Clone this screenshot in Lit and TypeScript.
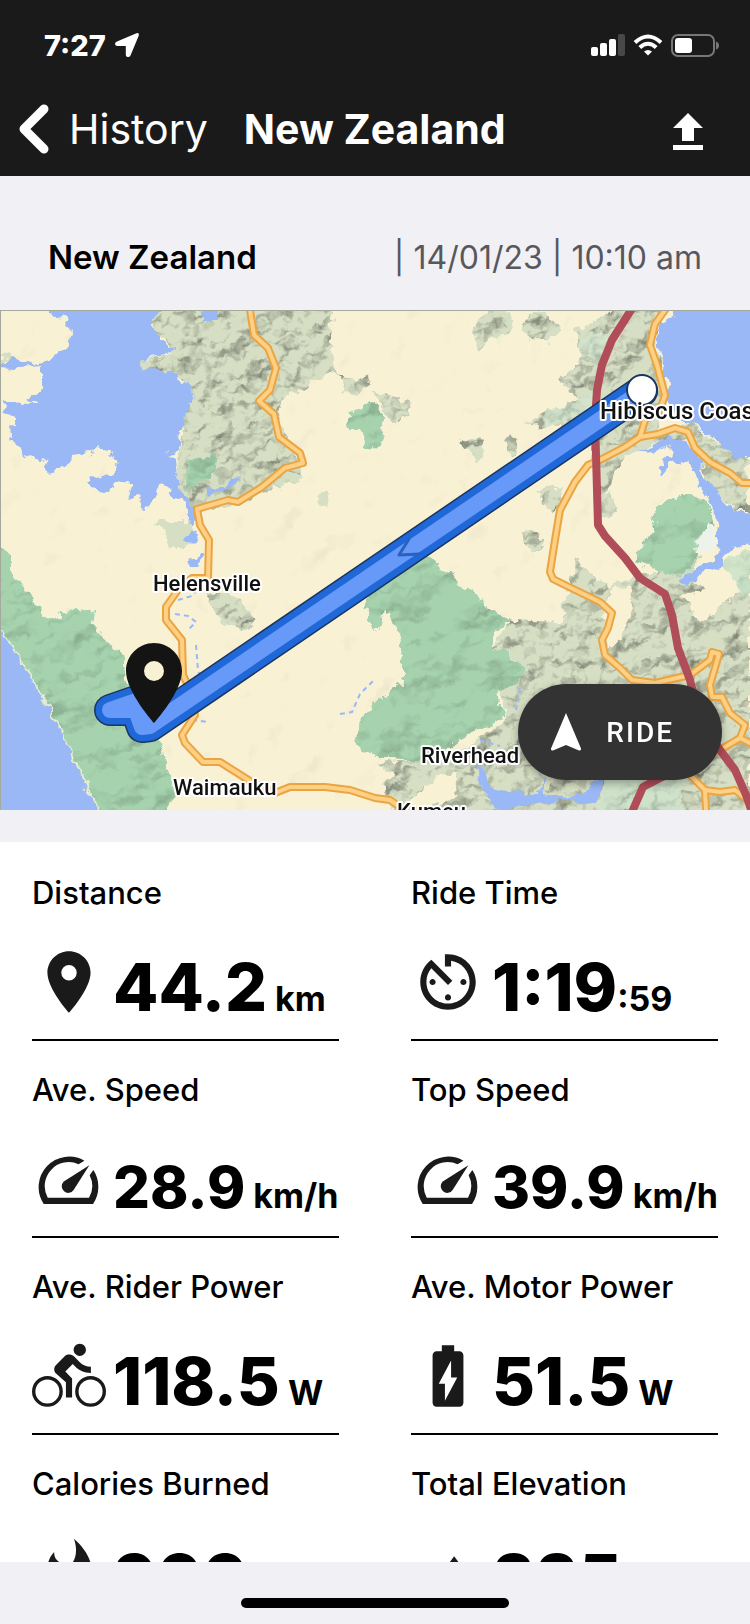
import { LitElement, html, css, svg, nothing } from 'lit';
import type { SVGTemplateResult } from 'lit';
import { customElement, property } from 'lit/decorators.js';
import { classMap } from 'lit/directives/class-map.js';

interface Stat {
  label: string;
  icon: string;
  value: string;
  unit: string;
  // the unit follows the value without a space
  tight?: boolean;
  small?: boolean;
}

const stats: Stat[] = [
  { label: 'Distance', icon: 'pin', value: '44.2', unit: 'km' },
  { label: 'Ride Time', icon: 'timer', value: '1:19', unit: ':59', tight: true },
  { label: 'Ave. Speed', icon: 'speed', value: '28.9', unit: 'km/h', small: true },
  { label: 'Top Speed', icon: 'speed', value: '39.9', unit: 'km/h', small: true },
  { label: 'Ave. Rider Power', icon: 'bike', value: '118.5', unit: 'W' },
  { label: 'Ave. Motor Power', icon: 'battery', value: '51.5', unit: 'W' },
  { label: 'Calories Burned', icon: 'flame', value: '900', unit: '' },
  { label: 'Total Elevation', icon: 'mountain', value: '335', unit: '' },
];

const icons: Record<string, SVGTemplateResult> = {
  pin: svg`<path fill-rule="evenodd" d="M12 2C8.13 2 5 5.13 5 9c0 5.25 7 13 7 13s7-7.75 7-13c0-3.87-3.13-7-7-7zm0 9.5a2.5 2.5 0 0 1 0-5 2.5 2.5 0 0 1 0 5z"/>`,
  timer: svg`<path d="M11 17c0 .55.45 1 1 1s1-.45 1-1-.45-1-1-1-1 .45-1 1zm0-14v4h2V5.08c3.39.49 6 3.39 6 6.92 0 3.87-3.13 7-7 7s-7-3.13-7-7c0-1.68.59-3.22 1.58-4.42L12 13l1.41-1.41-6.8-6.8v.02C4.42 6.45 3 9.05 3 12c0 4.97 4.02 9 9 9 4.97 0 9-4.03 9-9s-4.03-9-9-9h-1zm7 9c0-.55-.45-1-1-1s-1 .45-1 1 .45 1 1 1 1-.45 1-1zM6 12c0 .55.45 1 1 1s1-.45 1-1-.45-1-1-1-1 .45-1 1z"/>`,
  speed: svg`
    <path d="M17 6.05A9.9 9.9 0 0 0 3.8 20.1h16a9.9 9.9 0 0 0 .1-11l-1.2 1.7a7.8 7.8 0 0 1-.2 7.3H5.1A7.8 7.8 0 0 1 15.1 7.2z"/>
    <path d="M18.6 7.5l-5.1 8.1a2.1 2.1 0 0 1-3.1.4 2.2 2.2 0 0 1-.1-3.2z"/>`,
  bike: svg`
    <path d="M15.5 5.5c1.1 0 2-.9 2-2s-.9-2-2-2-2 .9-2 2 .9 2 2 2zM10.8 10.5l2.4-2.4.8.8c1.3 1.3 3 2.1 5.1 2.1V9c-1.5 0-2.7-.6-3.6-1.5l-1.9-1.9c-.5-.4-1-.6-1.6-.6s-1.1.2-1.4.6L7.8 8.4c-.4.4-.6.9-.6 1.4 0 .6.2 1.1.6 1.4L11 14v5h2v-6.2z"/>
    <g fill="none" stroke="currentColor" stroke-width="1.1">
      <circle cx="5" cy="17" r="4.45"/>
      <circle cx="19" cy="17" r="4.45"/>
    </g>`,
  battery: svg`<path d="M15.67 4H14V2h-4v2H8.33C7.6 4 7 4.6 7 5.33v15.33C7 21.4 7.6 22 8.33 22h7.33c.74 0 1.34-.6 1.34-1.33V5.33C17 4.6 16.4 4 15.67 4zM11 20v-5.5H9L13 7v5.5h2L11 20z"/>`,
  flame: svg`<path d="M13.6.9C16 3 18 5.5 18.9 8.4c1.6 4.5.6 13.6-6.9 13.6-7 0-8.5-8-6.7-13.6.4-1.2 1-2.3 1.9-3.2-.1 1.4.5 2.6 1.6 3.2 1.1.6 3.2 1.2 4.5 0C14.6 6.5 14.5 3.3 13.6.9z"/>`,
  mountain: svg`<path d="M14 6.6l-3.75 5 2.85 3.8-1.6 1.2C9.81 14.35 7 10.6 7 10.6l-6 8h22z"/>`,
};

@customElement('stat-tile')
class StatTile extends LitElement {
  @property({ attribute: false }) stat!: Stat;

  static styles = css`
    :host {
      display: block;
      padding: 29px 0 10px;
      border-bottom: 2px solid #000;
      color: #000;
    }
    h2 {
      margin: 0;
      font-size: 31px;
      line-height: 40px;
      font-weight: 500;
    }
    .row {
      display: flex;
      align-items: flex-start;
      gap: 7px;
      margin-top: 32px;
      height: 84px;
    }
    .icon {
      flex: none;
      width: 74px;
      height: 74px;
      color: #1a1a1a;
      fill: currentColor;
    }
    .reading {
      margin: 0;
      font-size: 66px;
      line-height: 84px;
      font-weight: 800;
      white-space: nowrap;
    }
    .reading span {
      line-height: 1;
    }
    .small {
      font-size: 58px;
    }
    .unit {
      font-size: 34px;
      font-weight: 700;
    }
  `;

  render() {
    const { label, icon, value, unit, tight, small } = this.stat;
    return html`
      <h2>${label}</h2>
      <div class="row">
        <svg class="icon" viewBox="0 0 24 24" aria-hidden="true">${icons[icon]}</svg>
        <p class="reading"><span class=${classMap({ small: !!small })}>${value}</span>${unit
          ? html`<span class="unit">${tight ? nothing : ' '}${unit}</span>`
          : nothing}</p>
      </div>
    `;
  }
}

const minorRoads = [
  'M250 0L254 25L268 38L276 58L270 80L259 91L274 104L279 127L300 143L303 153L285 158L262 177L238 192L228 190L197 199L200 215L209 230L208 268L192 268L178 280L166 297L166 310L182 330L183 365L190 380L195 405L182 425L185 433L203 452L220 452L250 471L275 483L290 477L325 477L350 480L375 488L390 490L400 497L430 504',
  'M665 0L655 14L650 35L657 55L665 85L660 100L645 110L640 127L625 137L600 150L588 155L575 172L560 200L555 230L550 262L553 269L565 275L600 292L612 303L608 318L602 330L605 345L620 358L632 370L655 373L690 365L710 350L712 342L719 344L710 375L712 387L722 387L730 403L745 415L740 428L720 440L700 450L690 465L705 480L720 482L735 480L750 492',
  'M640 127L658 124L675 118L688 122L695 138L710 152L730 163L742 173L750 173',
  'M740 428L750 433M705 480L706 500',
];

const highways = [
  'M631 0L612 30L602 55L597 80L595 110L598 215L605 226L625 248L640 268L665 284L672 305L678 338L690 370L700 410L720 440L735 460L746 485L752 502',
  'M632 502L643 477L660 468L690 455',
];

const route = 'M642 81L150 416L142 417L136 400L110 400L136 391L152 402';

const places = [
  { name: 'Hibiscus Coast', x: 600, y: 109, big: true },
  { name: 'Helensville', x: 153, y: 281 },
  { name: 'Waimauku', x: 173, y: 485 },
  { name: 'Riverhead', x: 421, y: 453 },
  { name: 'Kumeu', x: 397, y: 509 },
];

@customElement('ride-map')
class RideMap extends LitElement {
  static styles = css`
    :host {
      display: block;
      position: relative;
    }
    .map {
      display: block;
      width: 100%;
      aspect-ratio: 3 / 2;
      overflow: hidden;
    }
    .land {
      fill: #f8f1d4;
    }
    .water {
      fill: #9ab8f6;
    }
    .forest {
      fill: #a6d3ae;
    }
    .hills {
      fill: #d6dfc4;
    }
    .road,
    .highway,
    .route {
      fill: none;
      stroke-linejoin: round;
      stroke-linecap: round;
    }
    .casing {
      stroke: #e9a544;
      stroke-width: 8px;
    }
    .core {
      stroke: #ffd083;
      stroke-width: 4px;
    }
    .highway {
      stroke: #b04d58;
      stroke-width: 8px;
    }
    .edge {
      stroke: #1b3560;
      stroke-width: 32px;
    }
    .body {
      stroke: #2068d8;
      stroke-width: 29px;
    }
    .centre {
      stroke: #6699f8;
      stroke-width: 16px;
    }
    .arrow {
      stroke: #2a62c0;
      stroke-width: 3px;
    }
    .end {
      fill: #fff;
      stroke: #1b3560;
      stroke-width: 2px;
    }
    .place {
      font: 500 22px Roboto, sans-serif;
      fill: #111;
      stroke: #fff;
      stroke-width: 4px;
      stroke-linejoin: round;
      paint-order: stroke;
    }
    .big {
      font-size: 24px;
    }
    .ride {
      position: absolute;
      right: 28px;
      bottom: 30px;
      display: flex;
      align-items: center;
      gap: 24px;
      height: 96px;
      padding: 0 48px 0 32px;
      border: 0;
      border-radius: 48px;
      background: #333;
      box-shadow: 0 3px 8px rgba(0, 0, 0, 0.35);
      color: #fff;
      font: 500 28px Roboto, sans-serif;
      letter-spacing: 2px;
    }
    .ride svg {
      width: 32px;
      height: 38px;
      fill: #fff;
    }
  `;

  renderTerrain() {
    return svg`
      <g filter="url(#rough)">
        <g filter="url(#soft)">
          <rect class="land" x="-10" y="-10" width="770" height="520"/>
        </g>
        <g class="hills" filter="url(#relief)">
          <path d="M150 -9H335L330 30L336 60L312 74L290 85L278 98L285 130L302 158L300 172L288 172L270 180L240 192L196 202L176 178L178 145L190 80L178 66L140 58L139 50L172 44L172 36L158 24L150 12z"/>
          <path d="M335 58L345 68L360 72L368 64L370 74L358 86L345 80z"/>
          <path d="M474 20L480 5L500 -5L515 8L508 24L485 30L478 42z"/>
          <path d="M522 20L528 5L545 2L562 20L550 32L530 28z"/>
          <path d="M375 80L392 86L412 92L402 112L385 108z"/>
          <path d="M460 132L480 128L486 142L476 152z"/>
          <path d="M505 130L512 148L520 142L512 126z"/>
          <path d="M536 180L560 176L562 195L550 205z"/>
          <path d="M520 222L540 220L545 236L532 244z"/>
          <path d="M205 280L235 285L255 310L250 320L220 312z"/>
          <path d="M575 20L600 8L620 -5H665L655 30L665 80L664 100L655 125L690 114L715 132L748 150V200L735 200L715 185L690 130L650 134L625 146L605 182L598 200L593 120L560 116L525 115L548 100L578 90L560 70L582 50z"/>
          <path d="M596 195L610 180L615 205L600 210z"/>
          <path d="M512 310L560 312L575 250L610 278L640 262L680 262L720 290L750 255V510H395L375 452L450 450L505 410L495 335z"/>
        </g>
        <path class="land" d="M612 280L630 276L632 300L618 336L606 336L604 300zM440 465H456L458 486L440 496L400 500L420 482zM375 452L390 460L392 470L375 475zM680 285L715 278L738 262L742 280L715 300L700 312L690 296z"/>
        <path class="hills" d="M155 211H190L196 225L185 238H170L165 222zM318 187L326 182L330 192L324 198zM284 162L300 160L300 170L288 172zM0 46L12 42L8 52L0 54z"/>
        <g class="forest" filter="url(#relief-soft)">
          <path d="M183 160L190 152L215 142L219 148L218 162L195 178L186 180z"/>
          <path d="M347 102L362 98L368 91L376 96L381 102L382 132L378 138L363 137L362 125L352 116z"/>
          <path d="M400 255L420 245L452 262L458 276L474 282L490 300L512 310L494 322L495 335L525 357L520 372L497 383L505 408L480 418L465 428L430 452L385 449L365 440L355 435L358 415L375 390L390 385L402 372L402 345L397 318L385 297L380 322L370 318L365 290L378 278z"/>
          <path d="M652 202L670 190L688 185L705 190L712 200L714 225L700 242L685 262L665 264L650 258L636 250L643 232L655 220z"/>
          <path d="M580 30L600 20L606 30L598 50L582 44zM545 102L575 92L592 84L592 105L545 115z" opacity="0.5"/>
          <path d="M605 470L640 460L690 455L680 500H600z" opacity="0.6"/>
          <path d="M675 250L700 246L690 264L676 268zM722 254L750 238V290L742 280z" opacity="0.7"/>
          <path d="M-9 232L10 245L13 265L30 282L46 309L65 301L82 298L95 302L93 315L105 330L122 342L126 364L135 400L160 432L165 450L170 470L178 480L172 490L164 510H-9z"/>
        </g>
        <path class="water" d="M48 -9V6L66 8L72 22L70 35L60 41L50 50L35 55L24 50L12 46L5 54L-9 54V57L20 58L42 56L42 78L28 88L35 93L20 98L4 92L2 100L18 104L18 116L10 118L12 130L20 140L24 146L42 150L48 148L43 161L60 160L72 152L73 145L95 141L97 137L108 139L115 155L115 165L104 168L92 165L90 172L96 178L108 183L118 172L130 170L132 178L128 190L140 186L142 200L152 199L155 185L160 176L165 173L172 185L188 197L188 210L194 216L196 198L188 190L178 178L176 160L175 148L166 144L178 142L180 122L188 108L192 78L190 72L180 76L178 66L160 60L140 58L139 50L155 46L172 42L174 36L160 30L158 22L150 15L152 8L162 2L160 -9z"/>
        <path class="water" d="M202 -9H218L218 6L208 14L203 4zM204 182L215 178L228 176L232 166L240 172L225 180L208 186zM184 228L196 222L200 230L192 236zM188 248L204 244L198 256L190 256z"/>
        <path class="water" d="M667 -9L676 6L662 12L657 30L662 56L668 80L669 92L682 112L700 118L715 130L735 147L760 147V-9z"/>
        <path class="water" d="M635 139L655 135L668 126L682 128L698 145L703 165L715 178L725 196L740 202L760 200V230L735 238L722 250L725 256L700 264L688 276L680 270L700 256L718 246L719 225L716 205L705 185L695 170L688 148L682 158L674 150L662 166L660 160L672 142L668 134L655 142z"/>
        <path class="water" d="M478 452L485 460L490 478L505 482L540 484L542 462L545 484L570 488L590 478L607 460L600 482L596 494L560 490L530 496L500 500L490 490L480 472z"/>
        <path class="water" d="M-9 308L0 317L20 350L45 390L65 430L85 470L102 510H-9z"/>
        <path d="M0 317L20 350L45 390L65 430L85 470L102 510" fill="none" stroke="#e6ecd2" stroke-width="2"/>
        <path d="M695 238L702 222L708 212L716 224L719 234L710 242L700 243z" fill="#eef3ea"/>
      </g>
      <g fill="none" stroke="#9ab8f6" stroke-width="2" stroke-dasharray="5 4">
        <path d="M178 290L192 286L200 276M175 304L188 306L196 312L188 320M196 335L198 360L204 378M192 410L208 412M340 404L352 402L360 384L374 370"/>
        <path d="M520 378L516 400M480 430L500 436"/>
      </g>`;
  }

  render() {
    return html`
      <svg class="map" viewBox="0 0 750 500" preserveAspectRatio="xMidYMid slice" role="img" aria-label="Ride map">
        <defs>
          <filter id="rough" x="0" y="0" width="750" height="500" filterUnits="userSpaceOnUse" color-interpolation-filters="sRGB">
            <feTurbulence type="fractalNoise" baseFrequency="0.09" numOctaves="3" seed="4" result="n"/>
            <feDisplacementMap in="SourceGraphic" in2="n" scale="13" xChannelSelector="R" yChannelSelector="G"/>
          </filter>
          <filter id="relief" x="-10" y="-10" width="770" height="520" filterUnits="userSpaceOnUse" color-interpolation-filters="sRGB">
            <feTurbulence type="fractalNoise" baseFrequency="0.035 0.045" numOctaves="3" seed="11"/>
            <feDiffuseLighting lighting-color="#ffffff" surfaceScale="4" diffuseConstant="1.2" result="l">
              <feDistantLight azimuth="225" elevation="54"/>
            </feDiffuseLighting>
            <feBlend in="SourceGraphic" in2="l" mode="multiply"/>
            <feComposite in2="SourceGraphic" operator="in"/>
          </filter>
          <filter id="relief-soft" x="-10" y="-10" width="770" height="520" filterUnits="userSpaceOnUse" color-interpolation-filters="sRGB">
            <feTurbulence type="fractalNoise" baseFrequency="0.02 0.03" numOctaves="3" seed="6"/>
            <feDiffuseLighting lighting-color="#ffffff" surfaceScale="3" diffuseConstant="1.2" result="l">
              <feDistantLight azimuth="225" elevation="56"/>
            </feDiffuseLighting>
            <feBlend in="SourceGraphic" in2="l" mode="multiply"/>
            <feComposite in2="SourceGraphic" operator="in"/>
          </filter>
          <filter id="soft" x="-10" y="-10" width="770" height="520" filterUnits="userSpaceOnUse" color-interpolation-filters="sRGB">
            <feTurbulence type="fractalNoise" baseFrequency="0.03" numOctaves="2" seed="3"/>
            <feDiffuseLighting lighting-color="#ffffff" surfaceScale="1" diffuseConstant="1.2" result="l">
              <feDistantLight azimuth="225" elevation="58"/>
            </feDiffuseLighting>
            <feBlend in="SourceGraphic" in2="l" mode="multiply"/>
          </filter>
        </defs>
        ${this.renderTerrain()}
        ${minorRoads.map((d) => svg`<path class="road casing" d=${d}/>`)}
        ${minorRoads.map((d) => svg`<path class="road core" d=${d}/>`)}
        ${highways.map((d) => svg`<path class="highway" d=${d}/>`)}
        <path class="route edge" d=${route} />
        <path class="route body" d=${route} />
        <path class="route centre" d=${route} />
        <path class="route arrow" d="M409 229L399 245L420 244" />
        <circle class="end" cx="642" cy="80" r="15" />
        ${places.map(
          (p) => svg`<text class=${classMap({ place: true, big: !!p.big })} x=${p.x} y=${p.y}>${p.name}</text>`
        )}
        <g transform="translate(106 325) scale(4)">
          <circle cx="12" cy="9" r="3" fill="#f8f1d4" />
          <g fill="#141414">${icons.pin}</g>
        </g>
        <path d="M0 0.5H750M0.5 0V500" fill="none" stroke="#a5a99c" />
      </svg>
      <button class="ride" type="button">
        <svg viewBox="0 0 32 38" aria-hidden="true">
          <path d="M16 0L31 35.5Q31.5 38 29 37.5L16 32L3 37.5Q0.5 38 1 35.5z" />
        </svg>
        RIDE
      </button>
    `;
  }
}

@customElement('app-root')
class AppRoot extends LitElement {
  static styles = css`
    :host {
      display: flex;
      flex-direction: column;
      height: 100vh;
      background: #f1f0f5;
      font-family: Inter, 'Liberation Sans', sans-serif;
    }
    header {
      flex: none;
      background: #1a1a1a;
      color: #fff;
    }
    .status {
      display: flex;
      align-items: center;
      justify-content: space-between;
      height: 78px;
      padding: 6px 31px 0 44px;
    }
    .status div {
      display: flex;
      align-items: center;
      gap: 8px;
    }
    .time {
      font-size: 29px;
      font-weight: 800;
    }
    .status svg {
      display: block;
    }
    nav {
      display: flex;
      align-items: center;
      height: 92px;
      padding: 0 46px 2px 18px;
      box-sizing: border-box;
    }
    .back {
      display: flex;
      align-items: center;
      gap: 19px;
      color: #fff;
      font-size: 41px;
      line-height: 50px;
      text-decoration: none;
    }
    h1 {
      flex: 1;
      margin: 0 0 0 36px;
      font-size: 41px;
      line-height: 50px;
      font-weight: 700;
    }
    .upload {
      display: flex;
      padding: 4px 0 0;
      border: 0;
      background: none;
      color: #fff;
    }
    main {
      flex: 1;
      min-height: 0;
      overflow-y: auto;
      scrollbar-width: none;
    }
    .summary {
      display: flex;
      align-items: center;
      justify-content: space-between;
      height: 106px;
      padding: 28px 48px 0;
      font-size: 33px;
    }
    .name {
      font-weight: 600;
    }
    .date {
      color: #58585c;
      font-size: 32px;
    }
    .stats {
      display: grid;
      grid-template-columns: 1fr 1fr;
      column-gap: 72px;
      margin-top: 32px;
      padding: 2px 32px 32px;
      background: #fff;
    }
    footer {
      flex: none;
      display: flex;
      justify-content: center;
      align-items: center;
      height: 62px;
      padding-top: 20px;
      box-sizing: border-box;
    }
    .home {
      width: 268px;
      height: 10px;
      border-radius: 5px;
      background: #000;
    }
  `;

  render() {
    return html`
      <header>
        <div class="status">
          <div>
            <span class="time">7:27</span>
            <svg width="26" height="26" viewBox="0 0 26 26" fill="#fff" aria-hidden="true">
              <path d="M22.5 1.2Q25.5.5 24.8 3.5L16.500 23.5Q15 26 12.5 24.5Q11.8 24 11.8 22.5V14H3.5Q1 14 1 12Q1 10.4 3 9.5z" />
            </svg>
          </div>
          <div>
            <svg width="34" height="22" viewBox="0 0 34 22" fill="#fff" aria-hidden="true">
              <rect x="0" y="13" width="7" height="9" rx="2" />
              <rect x="9" y="9" width="7" height="13" rx="2" />
              <rect x="18" y="5" width="7" height="17" rx="2" />
              <rect x="27" y="0" width="7" height="22" rx="2" fill="#48484a" />
            </svg>
            <svg width="30" height="22" viewBox="0 0 30 22" fill="none" stroke="#fff" aria-hidden="true">
              <path d="M2 8.5Q15 -3.5 28 8.5" stroke-width="4" />
              <path d="M6.8 13.5Q15 6 23.2 13.5" stroke-width="4" />
              <path d="M15 21.5L11 17.5Q15 14.5 19 17.5z" fill="#fff" stroke="none" />
            </svg>
            <svg width="48" height="23" viewBox="0 0 48 23" aria-hidden="true">
              <rect x="1" y="1" width="42" height="21" rx="6" fill="none" stroke="#77777a" stroke-width="2" />
              <rect x="4" y="4" width="17" height="15" rx="3" fill="#fff" />
              <path d="M45 7.5Q48 8.5 48 11.5Q48 14.5 45 15.5z" fill="#77777a" />
            </svg>
          </div>
        </div>
        <nav>
          <a class="back" href="#history">
            <svg width="32" height="50" viewBox="0 0 32 50" fill="none" stroke="#fff" stroke-width="9" stroke-linecap="round" stroke-linejoin="round" aria-hidden="true">
              <path d="M26 5L6 25L26 45" />
            </svg>
            History
          </a>
          <h1>New Zealand</h1>
          <button class="upload" type="button" aria-label="Upload ride">
            <svg width="32" height="38" viewBox="0 0 32 38" fill="#fff" aria-hidden="true">
              <path d="M16 1L31 16H22V29H10V16H1zM1 33H31V38H1z" />
            </svg>
          </button>
        </nav>
      </header>
      <main>
        <div class="summary">
          <span class="name">New Zealand</span>
          <span class="date">| 14/01/23 | 10:10 am</span>
        </div>
        <ride-map></ride-map>
        <section class="stats">
          ${stats.map((stat) => html`<stat-tile .stat=${stat}></stat-tile>`)}
        </section>
      </main>
      <footer><div class="home"></div></footer>
    `;
  }
}
